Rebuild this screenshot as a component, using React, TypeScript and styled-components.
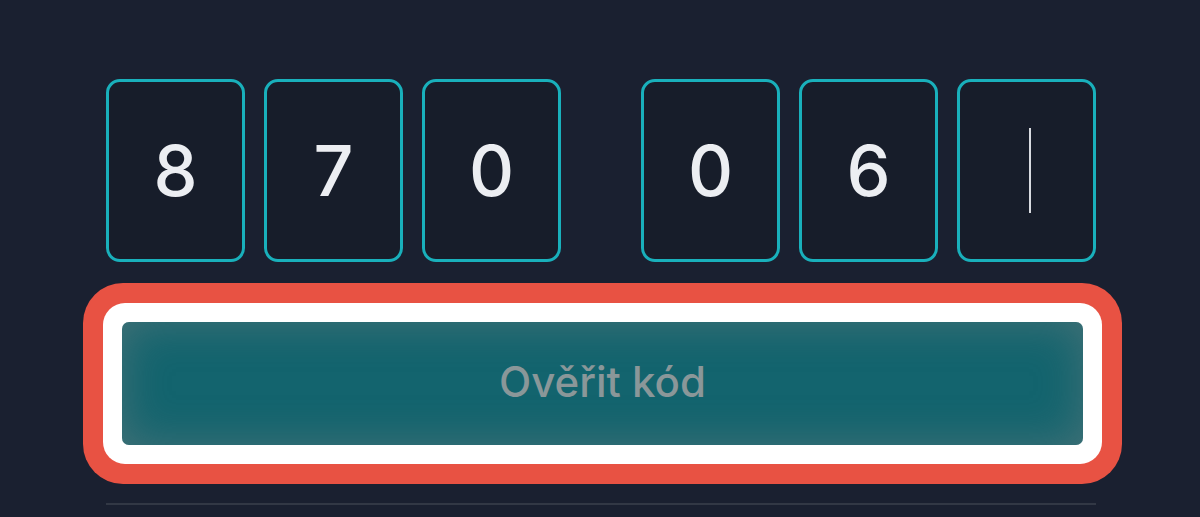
import React from "react";
import styled, { createGlobalStyle } from "styled-components";

const GlobalStyle = createGlobalStyle`
  html, body {
    margin: 0;
    padding: 0;
    background: #1a2030;
  }
  * {
    box-sizing: border-box;
  }
`;

const Page = styled.div`
  min-height: 517px;
  background: #1a2030;
  padding: 79px 0 0 106px;
  font-family: Inter, "Noto Sans", sans-serif;
  overflow: hidden;
`;

const Form = styled.div`
  width: 990px;
  display: flex;
  flex-direction: column;
`;

const CodeRow = styled.div`
  display: flex;
  gap: 80px;
`;

const Group = styled.div`
  display: flex;
  gap: 19px;
`;

const DigitBox = styled.div`
  width: 139px;
  height: 183px;
  border: 3px solid #19b0bb;
  border-radius: 14px;
  background: #171d2a;
  display: flex;
  align-items: center;
  justify-content: center;
  color: #eceef2;
  font-size: 70px;
  font-weight: 500;
`;

const Caret = styled.span`
  display: block;
  width: 2px;
  height: 85px;
  margin-left: 6px;
  background: #d8dbe0;
`;

// red annotation frame drawn around the highlighted button
const HighlightRing = styled.div`
  margin: 21px -26px 0 -23px;
  padding: 20px;
  border-radius: 40px;
  background: #e85243;
`;

const HighlightInner = styled.div`
  padding: 19px;
  border-radius: 22px;
  background: #ffffff;
  display: flex;
`;

const VerifyButton = styled.button`
  flex: 1;
  height: 123px;
  border: none;
  border-radius: 7px;
  background: #13646e;
  box-shadow: inset 0 0 45px rgba(130, 130, 130, 0.45);
  color: #8a9799;
  font-family: Inter, "Noto Sans", sans-serif;
  font-size: 42px;
  font-weight: 500;
  padding: 0 0 4px;
  cursor: pointer;
`;

const Divider = styled.hr`
  margin: 19px 0 0;
  border: none;
  border-top: 2px solid #323845;
`;

const first = ["8", "7", "0"];
const second = ["0", "6", ""];

const App: React.FC = () => {
  return (
    <Page>
      <GlobalStyle />
      <Form>
        <CodeRow>
          <Group>
            {first.map((d, i) => (
              <DigitBox key={"a" + i}>{d}</DigitBox>
            ))}
          </Group>
          <Group>
            {second.map((d, i) => (
              <DigitBox key={"b" + i}>{d || <Caret />}</DigitBox>
            ))}
          </Group>
        </CodeRow>
        <HighlightRing>
          <HighlightInner>
            <VerifyButton>Ověřit kód</VerifyButton>
          </HighlightInner>
        </HighlightRing>
        <Divider />
      </Form>
    </Page>
  );
};

export default App;
